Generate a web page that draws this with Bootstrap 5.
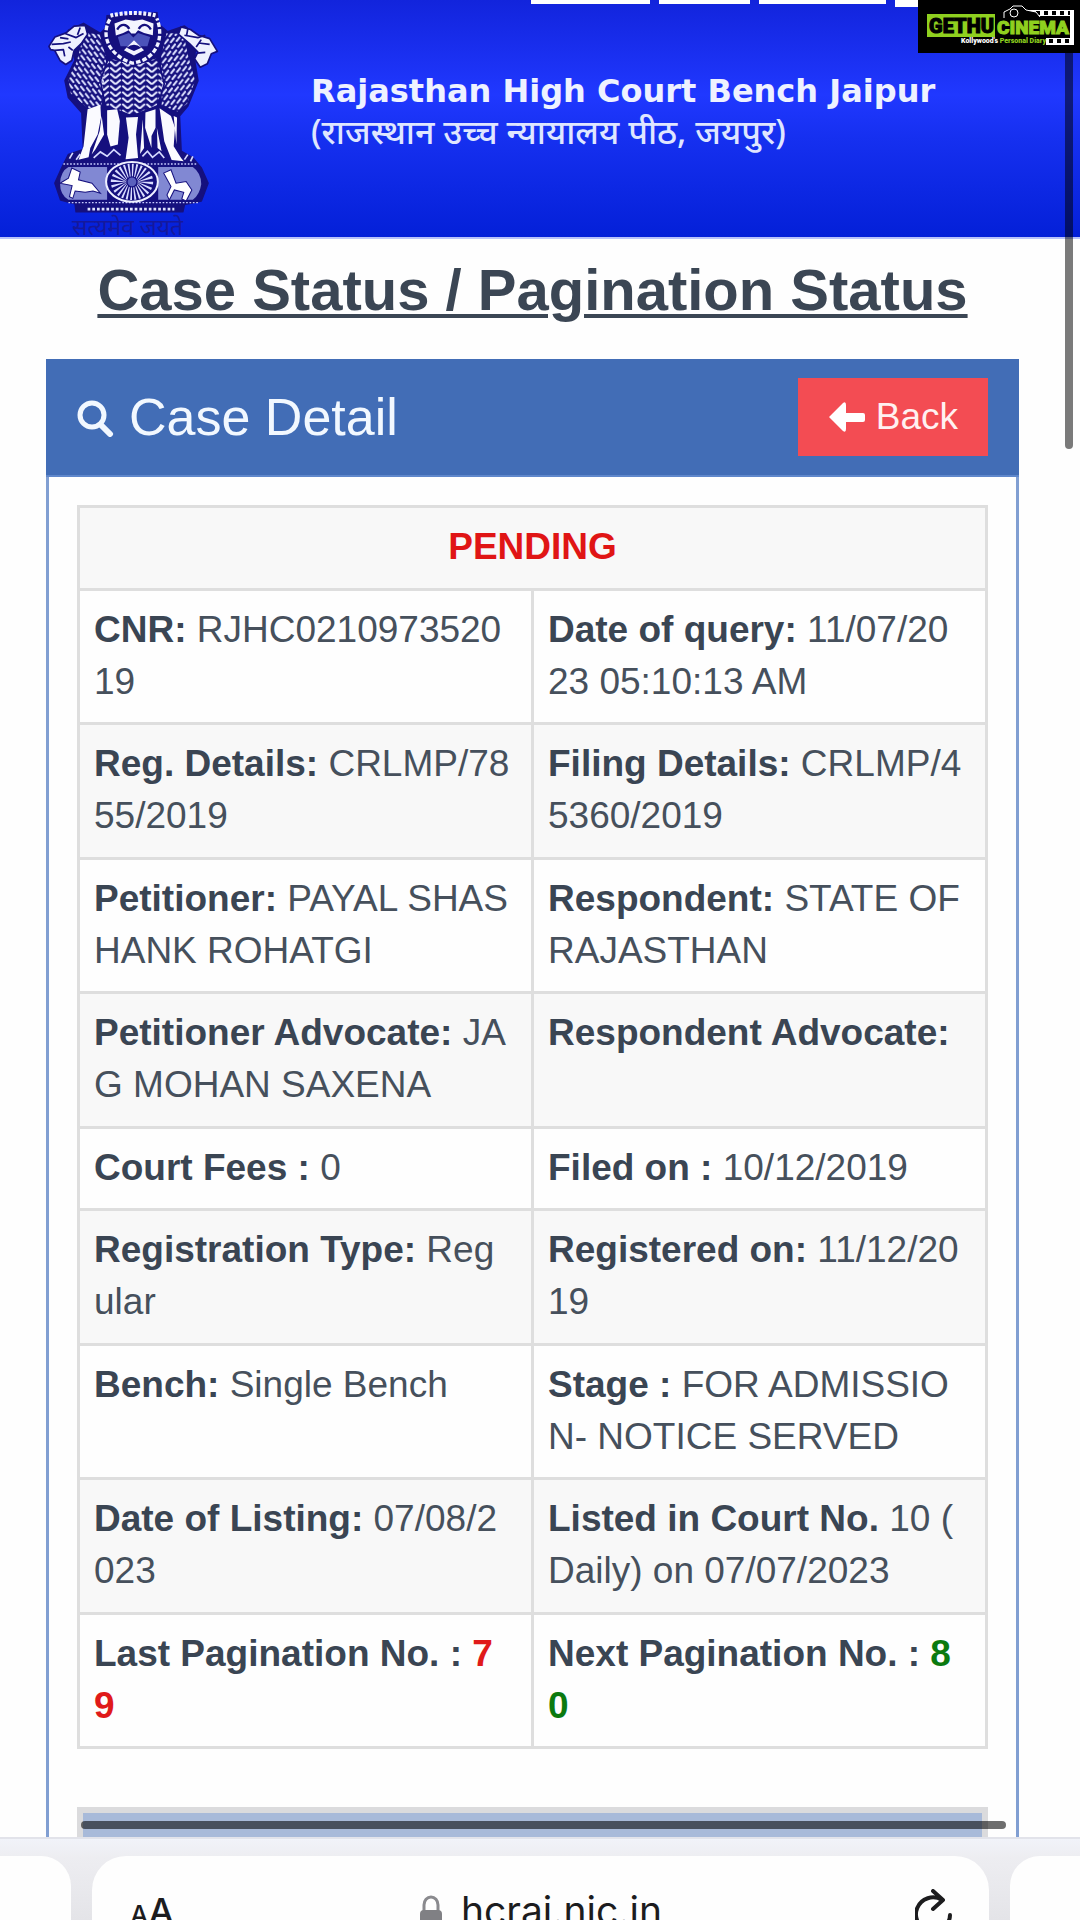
<!DOCTYPE html>
<html lang="en">
<head>
<meta charset="utf-8">
<meta name="viewport" content="width=device-width, initial-scale=1">
<title>Rajasthan High Court Bench Jaipur - Case Status</title>
<link href="https://cdn.jsdelivr.net/npm/bootstrap@5.3.0/dist/css/bootstrap.min.css" rel="stylesheet">
<style>
  body { font-family: "Liberation Sans", Arial, sans-serif; color: #3b4654; background: #fefefe; }
  .page-view { min-height: 0; }
  .site-head { height: 237px; background: linear-gradient(#1224dc 0%, #2038ff 40%, #1630f0 58%, #0420d8 100%); border-bottom: 2px solid #b9c3fa; color: #eef2ff; box-sizing: content-box; }
  .top-tabs { left: 531px; right: 162px; gap: 9px; }
  .top-tabs span { background: #fff; height: 4px; }
  .tab-a { flex: 119; } .tab-b { flex: 90; } .tab-c { flex: 127; }
  .top-tabs .tab-d { flex: 23; height: 7px; }
  .emblem { width: 176px; height: 229px; margin-left: 46px; }
  .court-name { margin-left: 89px; padding-top: 71px; font-family: "DejaVu Sans", Verdana, sans-serif; }
  .court-name h1 { font-size: 32px; line-height: 40px; font-weight: 700; }
  .court-name p { font-family: "Noto Sans", "Noto Sans Devanagari", sans-serif; font-size: 34px; line-height: 40px; font-weight: 500; color: #dfe6ff; }
  .page-title { font-size: 58px; line-height: 64px; font-weight: 700; margin: 19px 0 37px; text-decoration: underline; text-decoration-thickness: 4px; text-underline-offset: 4px; }
  .side-pad { padding: 0 61px 0 46px; }
  .case-panel { border: 3px solid #819fd2; border-top: 0; padding-bottom: 60px; }
  .case-bar { background: #426db6; color: #f2f8ff; height: 118px; margin: 0 -3px; padding: 0 31px; border-bottom: 2px solid #5f87cb; }
  .case-bar h2 { font-size: 52px; line-height: 60px; font-weight: 400; gap: 14px; }
  .back-btn { background: #f34c53; border: 0; border-radius: 0; color: #fff1f1; font-size: 37px; line-height: 54px; padding: 12px 30px; gap: 10px; }
  .back-btn:hover { background: #dd3b43; color: #fff; }
  .case-inner { padding: 28px 28px 0; }
  .case-table { table-layout: fixed; border: 3px solid #dedede; font-size: 37px; line-height: 52px; color: #46505c; word-break: break-all; background: #fff; }
  .case-table > tbody > tr > td, .case-table > tbody > tr > th { border: 3px solid #dedede; padding: 13px 18px 14px 14px; background: #fefefe; color: inherit; }
  .case-table > tbody > tr:nth-child(odd) > * { background: #f8f8f8; padding-bottom: 15px; }
  .case-table b { color: #3a4553; }
  .case-table > tbody > tr > .status-pending { color: #e01515; padding-right: 14px; }
  .case-table .no-last { color: #e01a1a; } .case-table .no-next { color: #0b7a0f; }
  .next-block { margin-top: 58px; height: 120px; border: 6px solid #dbdbdd; background: #a8bad9; }
  .scroll-v { top: 0; right: 7px; width: 8px; height: 449px; border-radius: 4px; background: rgba(0,0,0,.52); }
  .scroll-h { left: 81px; right: 74px; bottom: 8px; height: 8px; border-radius: 4px; background: rgba(0,0,0,.57); }
  .watermark { top: 0; right: 0; width: 162px; height: 53px; background: #000; }
  .safari-bar { height: 83px; background: linear-gradient(#f1f3f9, #ededf1 24%, #e4e4e8); border-top: 2px solid #e2e3ea; gap: 21px; padding-top: 17px; }
  .pill { background: #fefefe; border-radius: 34px 34px 0 0; height: 90px; }
  .pill-l { width: 71px; border-radius: 0 30px 0 0; } .pill-r { width: 70px; border-radius: 30px 0 0 0; }
  .pill-main { padding: 31px 36px 0 38px; }
  .tool { border: 0; background: none; padding: 0; color: #1c1c1e; font-family: Inter, sans-serif; font-weight: 500; line-height: 48px; }
  .aa-s { font-size: 26px; } .aa-l { font-size: 36px; }
  .url { font-family: Inter, sans-serif; font-size: 39px; line-height: 48px; color: #1c1c1e; gap: 18px; }
</style>
</head>
<body>
<div class="vh-100 d-flex flex-column overflow-hidden position-relative">
  <main class="page-view flex-grow-1 overflow-hidden position-relative">
    <header class="site-head d-flex align-items-start position-relative overflow-hidden">
      <div class="top-tabs position-absolute top-0 d-flex align-items-start"><span class="tab-a"></span><span class="tab-b"></span><span class="tab-c"></span><span class="tab-d"></span></div>
      <svg class="emblem flex-shrink-0 mt-2" viewBox="140 24 520 681" role="img" aria-label="State Emblem of India">
        <defs>
          <pattern id="mane" width="36" height="18" patternUnits="userSpaceOnUse" x="381"><path d="M2 15 14 5M34 15 22 5" stroke="#e8ebff" stroke-width="6" stroke-linecap="round"/></pattern>
          <pattern id="maneL" width="18" height="18" patternUnits="userSpaceOnUse" patternTransform="rotate(12)"><path d="M3 4 14 13" stroke="#dde1ff" stroke-width="6" stroke-linecap="round"/></pattern>
          <pattern id="maneR" width="18" height="18" patternUnits="userSpaceOnUse" patternTransform="rotate(-12)"><path d="M15 4 4 13" stroke="#dde1ff" stroke-width="6" stroke-linecap="round"/></pattern>
        </defs>
        <g stroke="#15107e" stroke-width="5" stroke-linejoin="round">
          <path fill="#15107e" d="M205 90 250 70 300 100 330 70 470 70 500 95 550 78 585 105 580 180 590 240 560 315 535 345 540 450 575 470 600 500 620 545 600 598 550 608 545 630 228 630 225 606 182 595 165 545 185 500 205 460 250 445 245 335 205 290 195 240 225 180Z"/>
          <path fill="url(#maneL)" d="M250 95 300 100 320 175 305 320 262 325 210 280 202 235 228 180Z"/>
          <path fill="url(#maneR)" d="M495 95 550 100 562 160 584 240 560 310 530 335 480 315 478 170Z"/>
          <path fill="url(#mane)" d="M325 170 400 192 470 170 490 250 470 315 395 345 315 315 300 240Z"/>
          <path fill="#eef0ff" d="M255 76 222 78 198 98 165 110 147 138 152 148 164 150 180 180 197 192 215 180 222 150 243 130 262 102Z"/>
          <path fill="#eef0ff" d="M540 80 568 88 592 105 625 115 648 153 630 160 618 190 597 200 580 175 590 155 565 130 532 102Z"/>
          <path fill="none" d="M155 132 190 130 212 125M165 150 190 148 194 168M180 112 205 116M195 100 228 112 250 100M240 82 232 104M205 140 218 150M592 128 625 132M588 158 612 156M550 105 590 112 612 105M600 118 585 140M560 86 556 108"/>
        </g>
        <path fill="#15107e" d="M318 45 470 36 484 130 450 182 400 195 340 175 310 115Z"/>
        <path fill="none" stroke="#f0f2ff" stroke-width="10" stroke-dasharray="14 6" d="M328 58C300 105 325 165 395 188 470 178 490 110 468 55"/>
        <path fill="none" stroke="#f0f2ff" stroke-width="12" stroke-dasharray="9 5" d="M330 47C370 36 430 36 466 47"/>
        <path fill="#f4f5ff" d="M342 70 375 58 400 62 425 58 458 70 456 105 430 98 412 90 404 100 392 100 384 90 368 98 346 106Z"/>
        <path fill="none" stroke="#15107e" stroke-width="7" d="M350 88C362 68 378 72 386 86M414 86C424 70 440 70 450 88"/>
        <path fill="#4b53ba" d="M352 110 385 98 398 112 412 98 448 110 440 138 360 138Z"/>
        <path fill="#f4f5ff" d="M370 150 400 120 430 150 400 165Z"/><path d="M378 142Q400 125 422 142L400 152Z" fill="#15107e"/>
        <g fill="#fafaff">
          <path d="M262 325 300 312 302 350 292 400 270 440 265 468 235 475 250 435Z"/>
          <path d="M320 328 350 325 358 360 352 430 330 436 320 400Z"/>
          <path d="M376 350 412 348 406 400 412 470 375 474 384 410Z"/>
          <path d="M434 335 464 325 464 380 452 405 452 440 433 380Z"/>
          <path d="M476 322 510 345 522 380 518 435 540 470 548 480 512 476 490 420Z"/>
          <path d="M304 345 311 400 285 445 274 460 298 390ZM426 355 430 440 418 458ZM468 380 482 450 470 440ZM518 345 528 350 526 430Z"/>
        </g>
        <path fill="none" stroke="#d5daff" stroke-width="5" d="M208 472 218 455M228 475 240 458M280 470 300 452 320 465 340 445 360 462M425 465 440 450 455 468 475 452 490 470M550 475 560 460M568 480 575 465"/>
        <path fill="none" stroke="#c7ccff" stroke-width="4" stroke-dasharray="5 5" d="M190 488H590M205 603H590"/>
        <path fill="#8188d3" d="M205 497H320V594H205Q180 580 180 545 182 510 205 497M472 497H575Q600 515 600 548 595 580 575 594H472Z"/>
        <path fill="#fff" stroke="#15107e" stroke-width="3" d="M180 545 205 530 215 500 240 512 235 535 275 545 300 575 278 568 255 572 225 568 218 590 208 585 216 552Z"/>
        <path fill="#fff" stroke="#15107e" stroke-width="3" d="M488 515 510 505 525 545 555 540 572 565 555 598 542 592 548 572 520 565 505 595 498 580 510 555Z"/>
        <ellipse cx="394" cy="541" rx="77" ry="59" fill="#15107e" stroke="#eef0ff" stroke-width="6"/>
        <ellipse cx="394" cy="541" rx="39" ry="30" fill="none" stroke="#d9dcff" stroke-width="48" stroke-dasharray="4 5"/>
        <circle cx="394" cy="541" r="15" fill="#5a60bd" stroke="#15107e" stroke-width="4"/>
        <path stroke="#dfe3ff" stroke-width="8" stroke-dasharray="8 6" d="M262 622H520"/>
        <text x="216" y="698" font-family="Noto Sans, sans-serif" font-size="68" fill="#15189c">सत्यमेव जयते</text>
      </svg>
      <div class="court-name">
        <h1 class="mb-0">Rajasthan High Court Bench Jaipur</h1>
        <p class="mb-0" lang="hi">(राजस्थान उच्च न्यायालय पीठ, जयपुर)</p>
      </div>
    </header>
    <div class="side-pad">
      <h2 class="page-title text-center text-nowrap">Case Status / Pagination Status</h2>
      <section class="case-panel">
        <div class="case-bar d-flex align-items-center justify-content-between">
          <h2 class="d-flex align-items-center mb-0">
            <svg width="38" height="40" viewBox="0 0 38 40" aria-hidden="true"><circle cx="15" cy="18" r="12" fill="none" stroke="#f2f8ff" stroke-width="5"/><path d="m24 28 9 9" stroke="#f2f8ff" stroke-width="6" stroke-linecap="round"/></svg>Case Detail</h2>
          <button class="btn back-btn d-flex align-items-center" type="button">
            <svg width="38" height="32" viewBox="0 0 38 32" aria-hidden="true"><path d="M1 16 15 2Q18 0 18 4V12H35Q37 12 37 14V19Q37 21 35 21H18V28Q18 32 15 30Z" fill="#fff"/></svg>Back</button>
        </div>
        <div class="case-inner">
          <table class="table case-table mb-0">
            <tbody>
              <tr><th colspan="2" class="text-center status-pending">PENDING</th></tr>
              <tr><td><b>CNR:</b> RJHC021097352019</td><td><b>Date of query:</b> 11/07/20<wbr>23 05:10:13 AM</td></tr>
              <tr><td><b>Reg. Details:</b> CRLMP/7855/2019</td><td><b>Filing Details:</b> CRLMP/45360/2019</td></tr>
              <tr><td><b>Petitioner:</b> PAYAL SHASHANK ROHATGI</td><td><b>Respondent:</b> STATE OF RAJASTHAN</td></tr>
              <tr><td><b>Petitioner Advocate:</b> JAG MOHAN SAXENA</td><td><b>Respondent Advocate:</b></td></tr>
              <tr><td><b>Court Fees :</b> 0</td><td><b>Filed on :</b> 10/12/2019</td></tr>
              <tr><td><b>Registration Type:</b> Regular</td><td><b>Registered on:</b> 11/12/2019</td></tr>
              <tr><td><b>Bench:</b> Single Bench</td><td><b>Stage :</b> FOR ADMISSION- NOTICE SERVED</td></tr>
              <tr><td><b>Date of Listing:</b> 07/08/2023</td><td><b>Listed in Court No.</b> 10 (<wbr>Daily) on 07/07/2023</td></tr>
              <tr><td><b>Last Pagination No. : <span class="no-last">79</span></b></td><td><b>Next Pagination No. : <span class="no-next">80</span></b></td></tr>
            </tbody>
          </table>
          <div class="next-block"></div>
        </div>
      </section>
    </div>
    <div class="scroll-v position-absolute"></div>
    <div class="scroll-h position-absolute"></div>
  </main>
  <footer class="safari-bar d-flex flex-shrink-0 overflow-hidden">
    <div class="pill pill-l flex-shrink-0"></div>
    <div class="pill pill-main flex-grow-1 d-flex justify-content-between align-items-start">
      <button class="tool" type="button" aria-label="Page settings"><span class="aa-s">A</span><span class="aa-l">A</span></button>
      <div class="url d-flex align-items-start me-2"><svg width="24" height="40" viewBox="0 0 24 40" class="mt-2" aria-hidden="true"><path d="M5 16V10a7 8 0 0 1 14 0v6" fill="none" stroke="#8a8a8e" stroke-width="3"/><rect x="1" y="15" width="22" height="20" rx="4" fill="#808084"/></svg><span>hcraj.nic.in</span></div>
      <button class="tool" type="button" aria-label="Reload"><svg width="38" height="48" viewBox="0 0 38 48" aria-hidden="true"><path d="M27 11A17 17 0 1 0 35 26M18 2 28 11 18 20" fill="none" stroke="#1c1c1e" stroke-width="4" stroke-linecap="round" stroke-linejoin="round"/></svg></button>
    </div>
    <div class="pill pill-r flex-shrink-0"></div>
  </footer>
  <svg class="watermark position-absolute" viewBox="0 0 162 53" role="img" aria-label="Gethu Cinema">
    <path fill="#fff" d="M110 10H156V45H128V38H152V16H116Z"/>
    <path stroke="#000" stroke-width="4" stroke-dasharray="4 4" d="M118 13H152M131 41H154"/>
    <path d="M86 18V12L92 9 95 6H104L108 10 118 12 122 17" fill="#000" stroke="#fff"/>
    <circle cx="96" cy="13" r="4" fill="#000" stroke="#fff"/>
    <rect x="9" y="14" width="68" height="23" fill="#8fd01f"/>
    <g font-family="Roboto, Liberation Sans, sans-serif" font-weight="900">
      <text x="11" y="33" font-size="20" fill="#000" stroke="#000">GETHU</text>
      <text x="79" y="34" font-size="19" fill="#8fd01f" stroke="#8fd01f">CINEMA</text>
      <text x="43" y="43" font-size="7" fill="#fff">Kollywood's <tspan fill="#8fd01f">Personal Diary</tspan></text>
    </g>
  </svg>
</div>
<script src="https://cdn.jsdelivr.net/npm/bootstrap@5.3.0/dist/js/bootstrap.bundle.min.js"></script>
</body>
</html>
